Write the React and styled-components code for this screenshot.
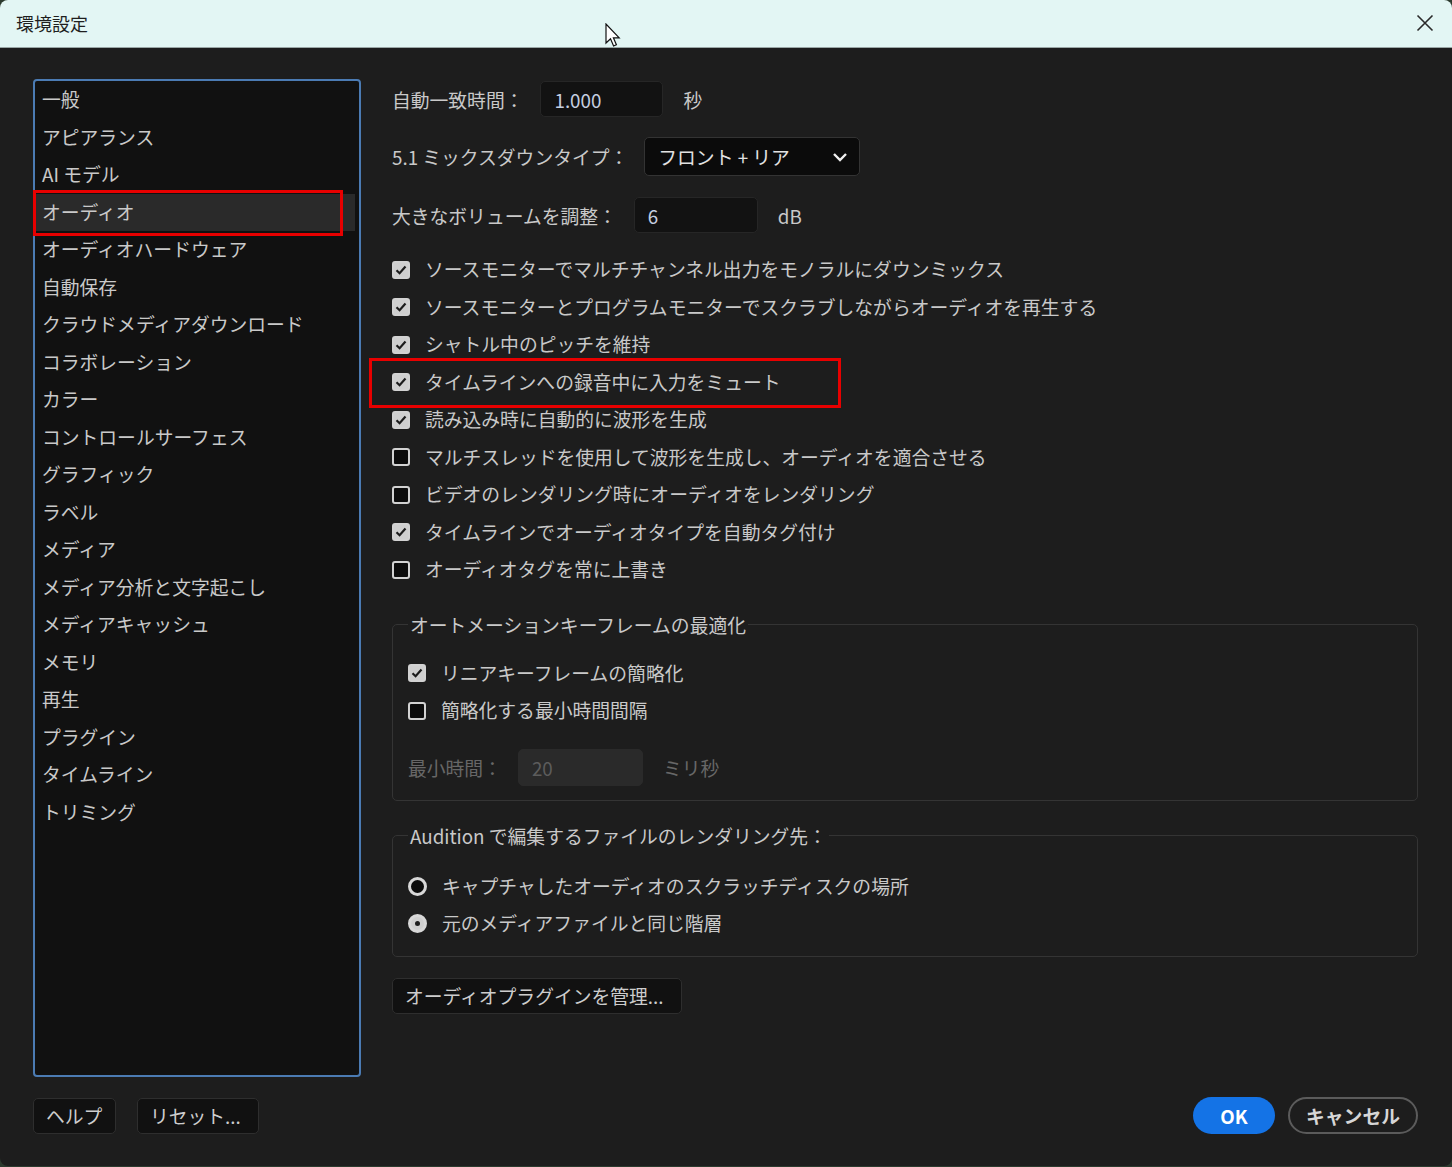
import React from 'react';
import styled, { createGlobalStyle } from 'styled-components';

const GlobalStyle = createGlobalStyle`
  html, body {
    margin: 0;
    padding: 0;
    background: #2c3a2e;
  }
  * {
    box-sizing: border-box;
  }
`;

const FONT = `"Noto Sans CJK JP", "Noto Sans", sans-serif`;

const StyledWindow = styled.div`
  position: relative;
  display: flex;
  flex-direction: column;
  width: 1452px;
  height: 1166px;
  border-radius: 8px;
  overflow: hidden;
  font-family: ${FONT};
  font-size: 18.8px;
  color: #c9c9c9;
`;

const StyledTitleBar = styled.div`
  position: relative;
  display: flex;
  align-items: center;
  justify-content: space-between;
  height: 48px;
  padding: 0 14px 2px 16px;
  background: #e3f6f4;
  border-bottom: 1px solid #9aa7a6;
  color: #1f1f1f;
  font-size: 18px;

  .close {
    display: flex;
    width: 26px;
    height: 26px;
    align-items: center;
    justify-content: center;
  }
`;

const StyledCursor = styled.svg`
  position: absolute;
  left: 605px;
  top: 23px;
`;

const StyledBody = styled.div`
  display: flex;
  flex: 1;
  flex-direction: column;
  padding: 31px 34px 0 33px;
  background: #1d1d1d;
`;

const StyledMain = styled.div`
  display: flex;
  height: 998px;
  gap: 31px;
`;

const StyledCategoryList = styled.ul`
  width: 328px;
  flex-shrink: 0;
  margin: 0;
  padding: 0 4px 0 0;
  list-style: none;
  background: #111111;
  border: 2px solid #4b7bb3;
  border-radius: 4px;
`;

const StyledCategory = styled.li`
  position: relative;
  height: 37.5px;
  padding-left: 7px;
  line-height: 36px;
  white-space: nowrap;
  background: ${({ $selected }) => ($selected ? '#2a2a2a' : 'transparent')};
`;

const StyledHighlight = styled.span`
  position: absolute;
  left: ${({ $left }) => $left}px;
  top: ${({ $top }) => $top}px;
  width: ${({ $width }) => $width}px;
  height: ${({ $height }) => $height}px;
  border: 3px solid #e80000;
  pointer-events: none;
`;

const StyledPanel = styled.div`
  display: flex;
  flex: 1;
  flex-direction: column;
  padding-top: 2px;
`;

const StyledFieldRow = styled.div`
  display: flex;
  align-items: center;
  margin-top: ${({ $gap }) => $gap}px;
  color: ${({ $disabled }) => ($disabled ? '#676767' : 'inherit')};
`;

const StyledInput = styled.div`
  display: flex;
  align-items: center;
  width: ${({ $width }) => $width}px;
  height: ${({ $height }) => $height || 36}px;
  margin: 0 20px 0 ${({ $offset }) => $offset}px;
  padding-left: 13px;
  background: ${({ $disabled }) => ($disabled ? '#2a2a2a' : '#121212')};
  border: 1px solid ${({ $disabled }) => ($disabled ? '#2a2a2a' : '#262626')};
  border-radius: 5px;
  color: ${({ $disabled }) => ($disabled ? '#5c5c5c' : '#c6cfe0')};
`;

const StyledSelect = styled.div`
  display: flex;
  align-items: center;
  justify-content: space-between;
  width: 216px;
  height: 39px;
  margin-left: 16px;
  padding: 0 11px 0 13px;
  background: #0b0b0b;
  border: 1px solid #333333;
  border-radius: 5px;
  color: #e2e2e2;
`;

const StyledCheckList = styled.div`
  display: flex;
  flex-direction: column;
  margin-top: ${({ $gap }) => $gap || 0}px;
`;

const StyledCheckRow = styled.div`
  position: relative;
  display: flex;
  align-items: center;
  gap: 15px;
  height: 37.5px;
  white-space: nowrap;
`;

const StyledLabel = styled.span`
  margin-top: -2px;
`;

const StyledBox = styled.span`
  display: flex;
  width: 18px;
  height: 18px;
  flex-shrink: 0;
  align-items: center;
  justify-content: center;
  border-radius: 3px;
  background: ${({ $checked }) => ($checked ? '#cfcfcf' : '#0c0c0c')};
  border: 2px solid #d2d2d2;
`;

const StyledRadio = styled.span`
  display: flex;
  width: 19px;
  height: 19px;
  flex-shrink: 0;
  align-items: center;
  justify-content: center;
  border-radius: 50%;
  background: ${({ $checked }) => ($checked ? '#cfcfcf' : '#0c0c0c')};
  border: 3px solid #d8d8d8;

  &::after {
    content: '';
    width: 5px;
    height: 5px;
    border-radius: 50%;
    background: ${({ $checked }) => ($checked ? '#1d1d1d' : 'transparent')};
  }
`;

const StyledGroup = styled.fieldset`
  margin: ${({ $gap }) => $gap}px 0 0;
  padding: ${({ $pad }) => $pad};
  border: 1px solid #343434;
  border-radius: 5px;

  legend {
    padding: 0 2px;
    line-height: 24px;
    color: #c9c9c9;
  }
`;

const StyledButton = styled.button`
  width: ${({ $width }) => $width}px;
  height: 36px;
  padding: 0 0 0 12px;
  margin-top: ${({ $gap }) => $gap || 0}px;
  text-align: left;
  background: #111111;
  border: 1px solid #2e2e2e;
  border-radius: 5px;
  color: #cdcdcd;
  font-family: ${FONT};
  font-size: 18.8px;
  white-space: nowrap;
`;

const StyledFooter = styled.div`
  display: flex;
  align-items: center;
  justify-content: space-between;
  margin-top: 20px;

  .group {
    display: flex;
    gap: 21px;
  }
  .group.right {
    gap: 13px;
  }
`;

const StyledPill = styled.button`
  width: ${({ $width }) => $width}px;
  height: 37px;
  border-radius: 19px;
  font-family: ${FONT};
  font-size: 18.8px;
  font-weight: 700;
  background: ${({ $primary }) => ($primary ? '#1473e6' : 'transparent')};
  border: ${({ $primary }) => ($primary ? 'none' : '2px solid #5b5b5b')};
  color: ${({ $primary }) => ($primary ? '#ffffff' : '#d6d6d6')};
`;

const categories = [
  '一般',
  'アピアランス',
  'AI モデル',
  'オーディオ',
  'オーディオハードウェア',
  '自動保存',
  'クラウドメディアダウンロード',
  'コラボレーション',
  'カラー',
  'コントロールサーフェス',
  'グラフィック',
  'ラベル',
  'メディア',
  'メディア分析と文字起こし',
  'メディアキャッシュ',
  'メモリ',
  '再生',
  'プラグイン',
  'タイムライン',
  'トリミング',
];

const options = [
  { label: 'ソースモニターでマルチチャンネル出力をモノラルにダウンミックス', checked: true },
  { label: 'ソースモニターとプログラムモニターでスクラブしながらオーディオを再生する', checked: true },
  { label: 'シャトル中のピッチを維持', checked: true },
  { label: 'タイムラインへの録音中に入力をミュート', checked: true, marked: true },
  { label: '読み込み時に自動的に波形を生成', checked: true },
  { label: 'マルチスレッドを使用して波形を生成し、オーディオを適合させる', checked: false },
  { label: 'ビデオのレンダリング時にオーディオをレンダリング', checked: false },
  { label: 'タイムラインでオーディオタイプを自動タグ付け', checked: true },
  { label: 'オーディオタグを常に上書き', checked: false },
];

const Check = () => (
  <svg width="12" height="10" viewBox="0 0 12 10">
    <path d="M1.5 5.2 L4.6 8.2 L10.5 1.6" fill="none" stroke="#1c1c1c" strokeWidth="2.2" />
  </svg>
);

const CheckItem = ({ label, checked, marked }) => (
  <StyledCheckRow>
    <StyledBox $checked={checked}>{checked && <Check />}</StyledBox>
    <StyledLabel>{label}</StyledLabel>
    {marked && <StyledHighlight $left={-23} $top={-6} $width={472} $height={50} />}
  </StyledCheckRow>
);

const RadioItem = ({ label, checked }) => (
  <StyledCheckRow>
    <StyledRadio $checked={checked} />
    <StyledLabel>{label}</StyledLabel>
  </StyledCheckRow>
);

const App = () => (
  <>
    <GlobalStyle />
    <StyledWindow>
      <StyledTitleBar>
        環境設定
        <span className="close">
          <svg width="18" height="18" viewBox="0 0 18 18">
            <path d="M1.5 1.5 L16.5 16.5 M16.5 1.5 L1.5 16.5" stroke="#2a2a2a" strokeWidth="1.6" />
          </svg>
        </span>
        <StyledCursor width="16" height="26" viewBox="0 0 16 26">
          <path d="M1 1 L1 20 L5.5 15.8 L8.6 23 L11.4 21.8 L8.4 14.8 L14.2 14.8 Z" fill="#ffffff" stroke="#111" strokeWidth="1.2" />
        </StyledCursor>
      </StyledTitleBar>

      <StyledBody>
        <StyledMain>
          <StyledCategoryList>
            {categories.map((name, i) => (
              <StyledCategory key={i} $selected={name === 'オーディオ'}>
                {name}
                {name === 'オーディオ' && <StyledHighlight $left={-2} $top={-4} $width={310} $height={46} />}
              </StyledCategory>
            ))}
          </StyledCategoryList>

          <StyledPanel>
            <StyledFieldRow $gap={0}>
              自動一致時間：
              <StyledInput $width={123} $offset={17}>1.000</StyledInput>
              秒
            </StyledFieldRow>
            <StyledFieldRow $gap={20}>
              5.1 ミックスダウンタイプ：
              <StyledSelect>
                フロント + リア
                <svg width="16" height="10" viewBox="0 0 16 10">
                  <path d="M2 2 L8 8 L14 2" fill="none" stroke="#f0f0f0" strokeWidth="2.4" />
                </svg>
              </StyledSelect>
            </StyledFieldRow>
            <StyledFieldRow $gap={21}>
              大きなボリュームを調整：
              <StyledInput $width={124} $offset={17}>6</StyledInput>
              dB
            </StyledFieldRow>

            <StyledCheckList $gap={18}>
              {options.map((opt, i) => (
                <CheckItem key={i} {...opt} />
              ))}
            </StyledCheckList>

            <StyledGroup $gap={24} $pad="18px 15px 14px">
              <legend>オートメーションキーフレームの最適化</legend>
              <StyledCheckList>
                <CheckItem label="リニアキーフレームの簡略化" checked />
                <CheckItem label="簡略化する最小時間間隔" checked={false} />
              </StyledCheckList>
              <StyledFieldRow $gap={19} $disabled>
                最小時間：
                <StyledInput $width={125} $height={37} $offset={16} $disabled>20</StyledInput>
                ミリ秒
              </StyledFieldRow>
            </StyledGroup>

            <StyledGroup $gap={23} $pad="20px 15px 13px">
              <legend>Audition で編集するファイルのレンダリング先：</legend>
              <StyledCheckList>
                <RadioItem label="キャプチャしたオーディオのスクラッチディスクの場所" />
                <RadioItem label="元のメディアファイルと同じ階層" checked />
              </StyledCheckList>
            </StyledGroup>

            <div>
              <StyledButton $gap={21} $width={290}>オーディオプラグインを管理...</StyledButton>
            </div>
          </StyledPanel>
        </StyledMain>

        <StyledFooter>
          <div className="group">
            <StyledButton $width={83}>ヘルプ</StyledButton>
            <StyledButton $width={122}>リセット...</StyledButton>
          </div>
          <div className="group right">
            <StyledPill $primary $width={82}>OK</StyledPill>
            <StyledPill $width={130}>キャンセル</StyledPill>
          </div>
        </StyledFooter>
      </StyledBody>
    </StyledWindow>
  </>
);

export default App;
